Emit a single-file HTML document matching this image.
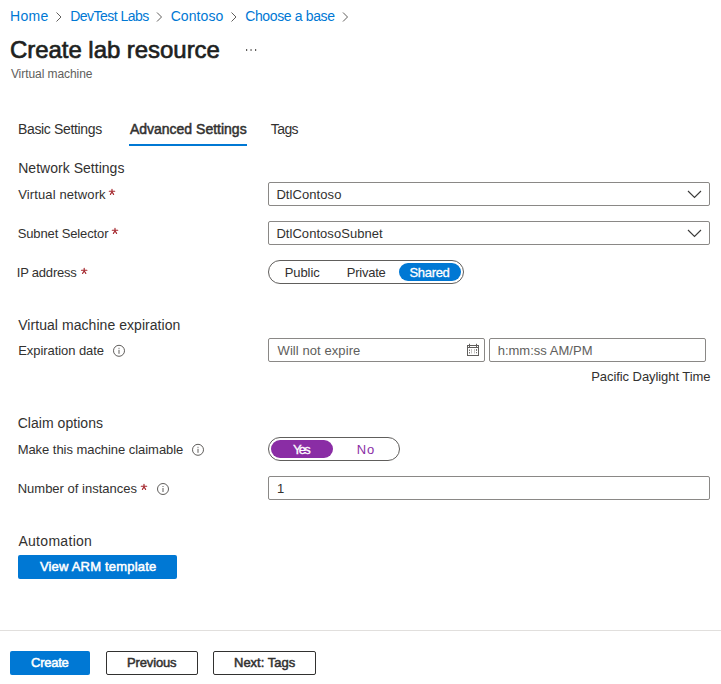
<!DOCTYPE html>
<html><head><meta charset="utf-8"><style>
html,body{margin:0;padding:0;background:#fff;width:721px;height:684px;overflow:hidden;position:relative}
.t{position:absolute;font-family:"Liberation Sans",sans-serif;line-height:1;white-space:nowrap}
.a{position:absolute;box-sizing:border-box}
</style></head><body>
<!-- breadcrumb chevrons -->
<svg class="a" style="left:0;top:0" width="721" height="684" viewBox="0 0 721 684">
 <g fill="none" stroke="#605e5c" stroke-width="1">
  <path d="M56.5 12.5 L61 17 L56.5 21.5"/>
  <path d="M157 12.5 L161.5 17 L157 21.5"/>
  <path d="M231.5 12.5 L236 17 L231.5 21.5"/>
  <path d="M343 12.5 L347.5 17 L343 21.5"/>
 </g>
 <g fill="#605e5c">
  <rect x="246" y="49" width="1.2" height="2"/>
  <rect x="250.5" y="49" width="1.1" height="2"/>
  <rect x="255" y="49" width="1.2" height="2"/>
 </g>
</svg>
<!-- tab underline -->
<div class="a" style="left:129px;top:144px;width:118px;height:2px;background:#0078d4"></div>
<!-- dropdowns -->
<div class="a" style="left:268px;top:182px;width:442px;height:24px;border:1px solid #8a8886;border-radius:2px"></div>
<div class="a" style="left:268px;top:221px;width:442px;height:24px;border:1px solid #8a8886;border-radius:2px"></div>
<svg class="a" style="left:0;top:0" width="721" height="684" viewBox="0 0 721 684">
 <g fill="none" stroke="#3b3a39" stroke-width="1.15">
  <path d="M688 191 L694.5 197.5 L701 191"/>
  <path d="M688 230 L694.5 236.5 L701 230"/>
 </g>
</svg>
<!-- segmented IP -->
<div class="a" style="left:268px;top:260px;width:196px;height:24px;border:1px solid #605e5c;border-radius:12px"></div>
<div class="a" style="left:399px;top:263px;width:62px;height:18px;background:#0078d4;border-radius:9px"></div>
<!-- date/time -->
<div class="a" style="left:268px;top:338px;width:217px;height:24px;border:1px solid #8a8886;border-radius:2px"></div>
<div class="a" style="left:489px;top:338px;width:217px;height:24px;border:1px solid #8a8886;border-radius:2px"></div>
<svg class="a" style="left:0;top:0" width="721" height="684" viewBox="0 0 721 684">
 <g fill="none" stroke="#605e5c" stroke-width="1">
  <rect x="467.5" y="345.5" width="11" height="10"/>
  <line x1="468" y1="347.5" x2="478" y2="347.5"/>
  <line x1="469.5" y1="343.8" x2="469.5" y2="347.5"/>
  <line x1="476.5" y1="343.8" x2="476.5" y2="347.5"/>
 </g>
 <g fill="#7a7876">
  <rect x="469" y="349.5" width="1" height="1.5"/><rect x="476" y="349" width="1" height="2"/>
  <rect x="469" y="352" width="1" height="1.5"/><rect x="476" y="352" width="1" height="1.2"/>
 </g>
 <g fill="#c8c6c4">
  <rect x="471" y="349" width="1" height="4.5"/><rect x="474" y="349" width="1" height="4.5"/>
 </g>
</svg>
<!-- yes/no -->
<div class="a" style="left:268px;top:437px;width:132px;height:24px;border:1px solid #605e5c;border-radius:12px"></div>
<div class="a" style="left:271px;top:440px;width:62px;height:18px;background:#8a2da5;border-radius:9px"></div>
<!-- number input -->
<div class="a" style="left:268px;top:476px;width:442px;height:24px;border:1px solid #8a8886;border-radius:2px"></div>
<!-- asterisks & info icons -->
<svg class="a" style="left:0;top:0" width="721" height="684" viewBox="0 0 721 684">
 <g fill="none" stroke="#605e5c" stroke-width="1">
  <circle cx="119" cy="350.8" r="5.5"/>
  <circle cx="198" cy="449.8" r="5.5"/>
  <circle cx="163" cy="489" r="5.5"/>
 </g>
 <g fill="#605e5c">
  <rect x="118.5" y="347.8" width="1" height="1"/><rect x="118.5" y="349.8" width="1" height="4"/>
  <rect x="197.5" y="446.8" width="1" height="1"/><rect x="197.5" y="448.8" width="1" height="4"/>
  <rect x="162.5" y="486" width="1" height="1"/><rect x="162.5" y="488" width="1" height="4"/>
 </g>
</svg>
<svg class="a" style="left:0;top:0" width="721" height="684" viewBox="0 0 721 684"><g fill="none" stroke="#a4262c" stroke-width="1.15" stroke-linecap="round"><path d="M112.0 189.2 L112.0 192.0 M109.3 191.2 L114.7 191.2 M110.4 194.4 L112.0 192.0 L113.6 194.4"/><path d="M115.0 228.2 L115.0 231.0 M112.3 230.2 L117.7 230.2 M113.4 233.4 L115.0 231.0 L116.6 233.4"/><path d="M84.2 268.2 L84.2 271.0 M81.5 270.2 L86.9 270.2 M82.6 273.4 L84.2 271.0 L85.8 273.4"/><path d="M144.0 484.2 L144.0 487.0 M141.3 486.2 L146.7 486.2 M142.4 489.4 L144.0 487.0 L145.6 489.4"/></g></svg>
<!-- buttons -->
<div class="a" style="left:18px;top:555px;width:159px;height:24px;background:#0078d4;border-radius:2px"></div>
<div class="a" style="left:0;top:630px;width:721px;height:1px;background:#e1dfdd"></div>
<div class="a" style="left:10px;top:651px;width:80px;height:24px;background:#0078d4;border-radius:2px"></div>
<div class="a" style="left:106px;top:651px;width:92px;height:24px;border:1px solid #323130;border-radius:2px"></div>
<div class="a" style="left:213px;top:651px;width:103px;height:24px;border:1px solid #323130;border-radius:2px"></div>

<div id="bc1" class="t" style="left:10.00px;top:9.15px;font-size:14px;font-weight:400;letter-spacing:0.300px;color:#0078d4">Home</div>
<div id="bc2" class="t" style="left:70.16px;top:9.15px;font-size:14px;font-weight:400;letter-spacing:-0.524px;color:#0078d4">DevTest Labs</div>
<div id="bc3" class="t" style="left:170.66px;top:9.15px;font-size:14px;font-weight:400;letter-spacing:0.090px;color:#0078d4">Contoso</div>
<div id="bc4" class="t" style="left:245.16px;top:9.15px;font-size:14px;font-weight:400;letter-spacing:-0.360px;color:#0078d4">Choose a base</div>
<div id="title" class="t" style="left:10.00px;top:38.01px;font-size:24px;font-weight:400;letter-spacing:-0.050px;color:#201f1e;-webkit-text-stroke:0.65px #201f1e">Create lab resource</div>
<div id="sub" class="t" style="left:10.90px;top:68.00px;font-size:12px;font-weight:400;letter-spacing:-0.064px;color:#605e5c">Virtual machine</div>
<div id="tab1" class="t" style="left:18.00px;top:122.01px;font-size:14px;font-weight:400;letter-spacing:-0.346px;color:#323130">Basic Settings</div>
<div id="tab2" class="t" style="left:129.90px;top:122.01px;font-size:14px;font-weight:400;letter-spacing:0.000px;color:#323130;-webkit-text-stroke:0.5px #323130">Advanced Settings</div>
<div id="tab3" class="t" style="left:270.82px;top:122.01px;font-size:14px;font-weight:400;letter-spacing:-0.600px;color:#323130">Tags</div>
<div id="h1" class="t" style="left:18.24px;top:160.51px;font-size:14px;font-weight:400;letter-spacing:0.024px;color:#323130">Network Settings</div>
<div id="l1" class="t" style="left:18.24px;top:187.50px;font-size:13px;font-weight:400;letter-spacing:0.116px;color:#323130">Virtual network</div>
<div id="l2" class="t" style="left:17.66px;top:227.00px;font-size:13px;font-weight:400;letter-spacing:-0.116px;color:#323130">Subnet Selector</div>
<div id="l3" class="t" style="left:16.76px;top:266.00px;font-size:13px;font-weight:400;letter-spacing:-0.200px;color:#323130">IP address</div>
<div id="v1" class="t" style="left:276.42px;top:188.00px;font-size:13px;font-weight:400;letter-spacing:0.080px;color:#323130">DtlContoso</div>
<div id="v2" class="t" style="left:276.42px;top:227.00px;font-size:13px;font-weight:400;letter-spacing:0.048px;color:#323130">DtlContosoSubnet</div>
<div id="s1" class="t" style="left:284.66px;top:266.00px;font-size:13px;font-weight:400;letter-spacing:-0.072px;color:#323130">Public</div>
<div id="s2" class="t" style="left:346.74px;top:266.00px;font-size:13px;font-weight:400;letter-spacing:-0.240px;color:#323130">Private</div>
<div id="s3" class="t" style="left:409.50px;top:266.00px;font-size:13px;font-weight:400;letter-spacing:-0.324px;color:#ffffff;-webkit-text-stroke:0.3px #ffffff">Shared</div>
<div id="h2" class="t" style="left:18.24px;top:317.51px;font-size:14px;font-weight:400;letter-spacing:0.050px;color:#323130">Virtual machine expiration</div>
<div id="l4" class="t" style="left:18.24px;top:344.00px;font-size:13px;font-weight:400;letter-spacing:-0.064px;color:#323130">Expiration date</div>
<div id="p1" class="t" style="left:277.56px;top:344.00px;font-size:13px;font-weight:400;letter-spacing:0.077px;color:#605e5c">Will not expire</div>
<div id="p2" class="t" style="left:497.66px;top:344.00px;font-size:13px;font-weight:400;letter-spacing:0.015px;color:#605e5c">h:mm:ss AM/PM</div>
<div id="tz" class="t" style="left:591.24px;top:370.00px;font-size:13px;font-weight:400;letter-spacing:-0.072px;color:#323130">Pacific Daylight Time</div>
<div id="h3" class="t" style="left:17.66px;top:416.01px;font-size:14px;font-weight:400;letter-spacing:0.045px;color:#323130">Claim options</div>
<div id="l5" class="t" style="left:17.66px;top:443.41px;font-size:13px;font-weight:400;letter-spacing:-0.048px;color:#323130">Make this machine claimable</div>
<div id="y1" class="t" style="left:292.90px;top:443.00px;font-size:13px;font-weight:400;letter-spacing:-1.620px;color:#ffffff;-webkit-text-stroke:0.3px #ffffff">Yes</div>
<div id="y2" class="t" style="left:356.82px;top:443.00px;font-size:13px;font-weight:400;letter-spacing:0.720px;color:#8a2da5">No</div>
<div id="l6" class="t" style="left:17.66px;top:482.00px;font-size:13px;font-weight:400;letter-spacing:0.010px;color:#323130">Number of instances</div>
<div id="n1" class="t" style="left:277.00px;top:482.00px;font-size:13px;font-weight:400;letter-spacing:0.000px;color:#323130">1</div>
<div id="h4" class="t" style="left:18.40px;top:534.01px;font-size:14px;font-weight:400;letter-spacing:0.300px;color:#323130">Automation</div>
<div id="b1" class="t" style="left:39.90px;top:559.50px;font-size:13px;font-weight:400;letter-spacing:0.197px;color:#ffffff;-webkit-text-stroke:0.5px #ffffff">View ARM template</div>
<div id="b2" class="t" style="left:31.10px;top:655.50px;font-size:13px;font-weight:400;letter-spacing:-0.270px;color:#ffffff;-webkit-text-stroke:0.5px #ffffff">Create</div>
<div id="b3" class="t" style="left:126.95px;top:655.50px;font-size:13px;font-weight:400;letter-spacing:-0.129px;color:#323130;-webkit-text-stroke:0.5px #323130">Previous</div>
<div id="b4" class="t" style="left:234.00px;top:655.50px;font-size:13px;font-weight:400;letter-spacing:0.000px;color:#323130;-webkit-text-stroke:0.5px #323130">Next: Tags</div>
</body></html>
